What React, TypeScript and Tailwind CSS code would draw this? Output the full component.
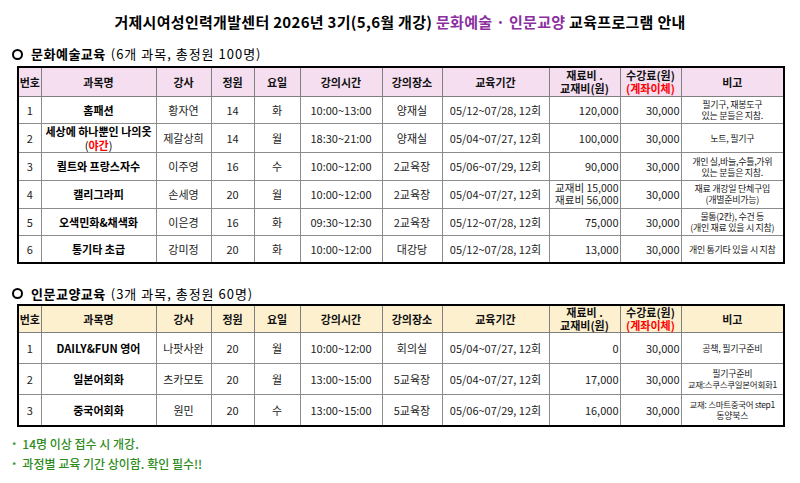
import type { ReactNode } from 'react'

type Row = {
  no: string
  name: ReactNode
  teacher: string
  cap: string
  day: string
  time: string
  place: string
  period: string
  cost: ReactNode
  fee: string
  note: ReactNode
}

const widths = [23, 115, 55, 43, 46, 82, 60, 107, 71, 61, 103]

const artsRows: Row[] = [
  { no: '1', name: '홈패션', teacher: '황자연', cap: '14', day: '화', time: '10:00~13:00', place: '양재실', period: '05/12~07/28, 12회', cost: '120,000', fee: '30,000', note: <>필기구, 재봉도구<br />있는 분들은 지참.</> },
  { no: '2', name: <span className="block leading-[14px] text-[11px]">세상에 하나뿐인 나의옷<br /><span className="font-normal">(<span className="text-[#ff0000] font-bold">야간</span>)</span></span>, teacher: '제갈상희', cap: '14', day: '월', time: '18:30~21:00', place: '양재실', period: '05/04~07/27, 12회', cost: '100,000', fee: '30,000', note: '노트, 필기구' },
  { no: '3', name: '퀼트와 프랑스자수', teacher: '이주영', cap: '16', day: '수', time: '10:00~12:00', place: '2교육장', period: '05/06~07/29, 12회', cost: '90,000', fee: '30,000', note: <>개인 실,바늘,수틀,가위<br />있는 분들은 지참.</> },
  { no: '4', name: '캘리그라피', teacher: '손세영', cap: '20', day: '월', time: '10:00~12:00', place: '2교육장', period: '05/04~07/27, 12회', cost: <span className="block leading-[12px] text-[10.5px]">교재비 15,000<br />재료비 56,000</span>, fee: '30,000', note: <>재료 개강일 단체구입<br />(개별준비가능)</> },
  { no: '5', name: '오색민화&채색화', teacher: '이은경', cap: '16', day: '화', time: '09:30~12:30', place: '2교육장', period: '05/12~07/28, 12회', cost: '75,000', fee: '30,000', note: <>물통(2칸), 수건 등<br />(개인 재료 있을 시 지참)</> },
  { no: '6', name: '통기타 초급', teacher: '강미정', cap: '20', day: '화', time: '10:00~12:00', place: '대강당', period: '05/12~07/28, 12회', cost: '13,000', fee: '30,000', note: '개인 통기타 있을 시 지참' },
]

const humanRows: Row[] = [
  { no: '1', name: 'DAILY&FUN 영어', teacher: '나팟사완', cap: '20', day: '월', time: '10:00~12:00', place: '회의실', period: '05/04~07/27, 12회', cost: '0', fee: '30,000', note: '공책, 필기구준비' },
  { no: '2', name: '일본어회화', teacher: '츠카모토', cap: '20', day: '월', time: '13:00~15:00', place: '5교육장', period: '05/04~07/27, 12회', cost: '17,000', fee: '30,000', note: <>필기구준비<br /><span className="text-[8.5px]">교재:스쿠스쿠일본어회화1</span></> },
  { no: '3', name: '중국어회화', teacher: '원민', cap: '20', day: '수', time: '13:00~15:00', place: '5교육장', period: '05/06~07/29, 12회', cost: '16,000', fee: '30,000', note: <><span className="text-[8.5px]">교재: 스마트중국어 step1</span><br />동양북스</> },
]

function Heading({ title, sub }: { title: string; sub: string }) {
  return (
    <div className="flex items-center h-[20px] pl-[12px]">
      <span className="w-[11px] h-[11px] rounded-full border-[2.5px] border-black mr-[8px]" />
      <span className="text-[13px] font-bold text-black tracking-[0.5px]">{title}</span>
      <span className="text-[13px] text-black ml-[5px] tracking-[1px]">{sub}</span>
    </div>
  )
}

function ProgramTable({ rows, headBg, headH, rowH }: { rows: Row[]; headBg: string; headH: string; rowH: string }) {
  const th = `border border-[#7f7f7f] font-bold text-[11px] text-[#111] whitespace-nowrap ${headBg} ${headH}`
  const td = `border border-[#8c8c8c] text-[11px] text-[#222] text-center whitespace-nowrap p-0 ${rowH}`
  return (
    <table className="ml-[17px] w-[766px] table-fixed border-collapse border-2 border-black">
      <colgroup>
        {widths.map((w, i) => (
          <col key={i} style={{ width: w }} />
        ))}
      </colgroup>
      <thead>
        <tr>
          <th className={th}>번호</th>
          <th className={th}>과목명</th>
          <th className={th}>강사</th>
          <th className={th}>정원</th>
          <th className={th}>요일</th>
          <th className={th}>강의시간</th>
          <th className={th}>강의장소</th>
          <th className={th}>교육기간</th>
          <th className={`${th} leading-[13px]`}>재료비 .<br />교재비(원)</th>
          <th className={`${th} leading-[13px]`}>수강료(원)<br /><span className="text-[#ff0000]">(계좌이체)</span></th>
          <th className={th}>비고</th>
        </tr>
      </thead>
      <tbody>
        {rows.map((r) => (
          <tr key={r.no}>
            <td className={td}>{r.no}</td>
            <td className={`${td} font-bold text-[11.5px] text-black`}>{r.name}</td>
            <td className={td}>{r.teacher}</td>
            <td className={td}>{r.cap}</td>
            <td className={td}>{r.day}</td>
            <td className={`${td} text-[11.5px]`}>{r.time}</td>
            <td className={td}>{r.place}</td>
            <td className={`${td} text-[11.5px]`}>{r.period}</td>
            <td className={`${td} !text-right !pr-[1px]`}>{r.cost}</td>
            <td className={`${td} !text-right !pr-[1px]`}>{r.fee}</td>
            <td className={`${td} !text-[9px] !leading-[11px] tracking-[-0.3px]`}>{r.note}</td>
          </tr>
        ))}
      </tbody>
    </table>
  )
}

export default function App() {
  return (
    <div className="w-[800px] h-[483px] bg-white overflow-hidden" style={{ fontFamily: '"Noto Sans CJK KR", "Noto Sans", sans-serif' }}>
      <div className="h-[44px] flex items-center justify-center pt-[1px] text-[15px] font-bold text-black tracking-[0.3px]">
        <span>거제시여성인력개발센터 2026년 3기(5,6월 개강)&nbsp;</span>
        <span className="text-[#8b2fa0]">문화예술 · 인문교양</span>
        <span>&nbsp;교육프로그램 안내</span>
      </div>
      <div className="pb-[2px]">
        <Heading title="문화예술교육" sub="(6개 과목, 총정원 100명)" />
      </div>
      <ProgramTable rows={artsRows} headBg="bg-[#f4def0]" headH="h-[29px]" rowH="h-[27.7px]" />
      <div className="pt-[19px] pb-[1px]">
        <Heading title="인문교양교육" sub="(3개 과목, 총정원 60명)" />
      </div>
      <ProgramTable rows={humanRows} headBg="bg-[#fdf0cf]" headH="h-[27px]" rowH="h-[31px]" />
      <div className="mt-[8px] pl-[12px] text-[12px] font-medium text-[#2e8b1c] leading-[18px]">
        <div><span className="text-[9px] mr-[6px]">*</span>14명 이상 접수 시 개강.</div>
        <div><span className="text-[9px] mr-[6px]">*</span>과정별 교육 기간 상이함. 확인 필수!!</div>
      </div>
    </div>
  )
}
